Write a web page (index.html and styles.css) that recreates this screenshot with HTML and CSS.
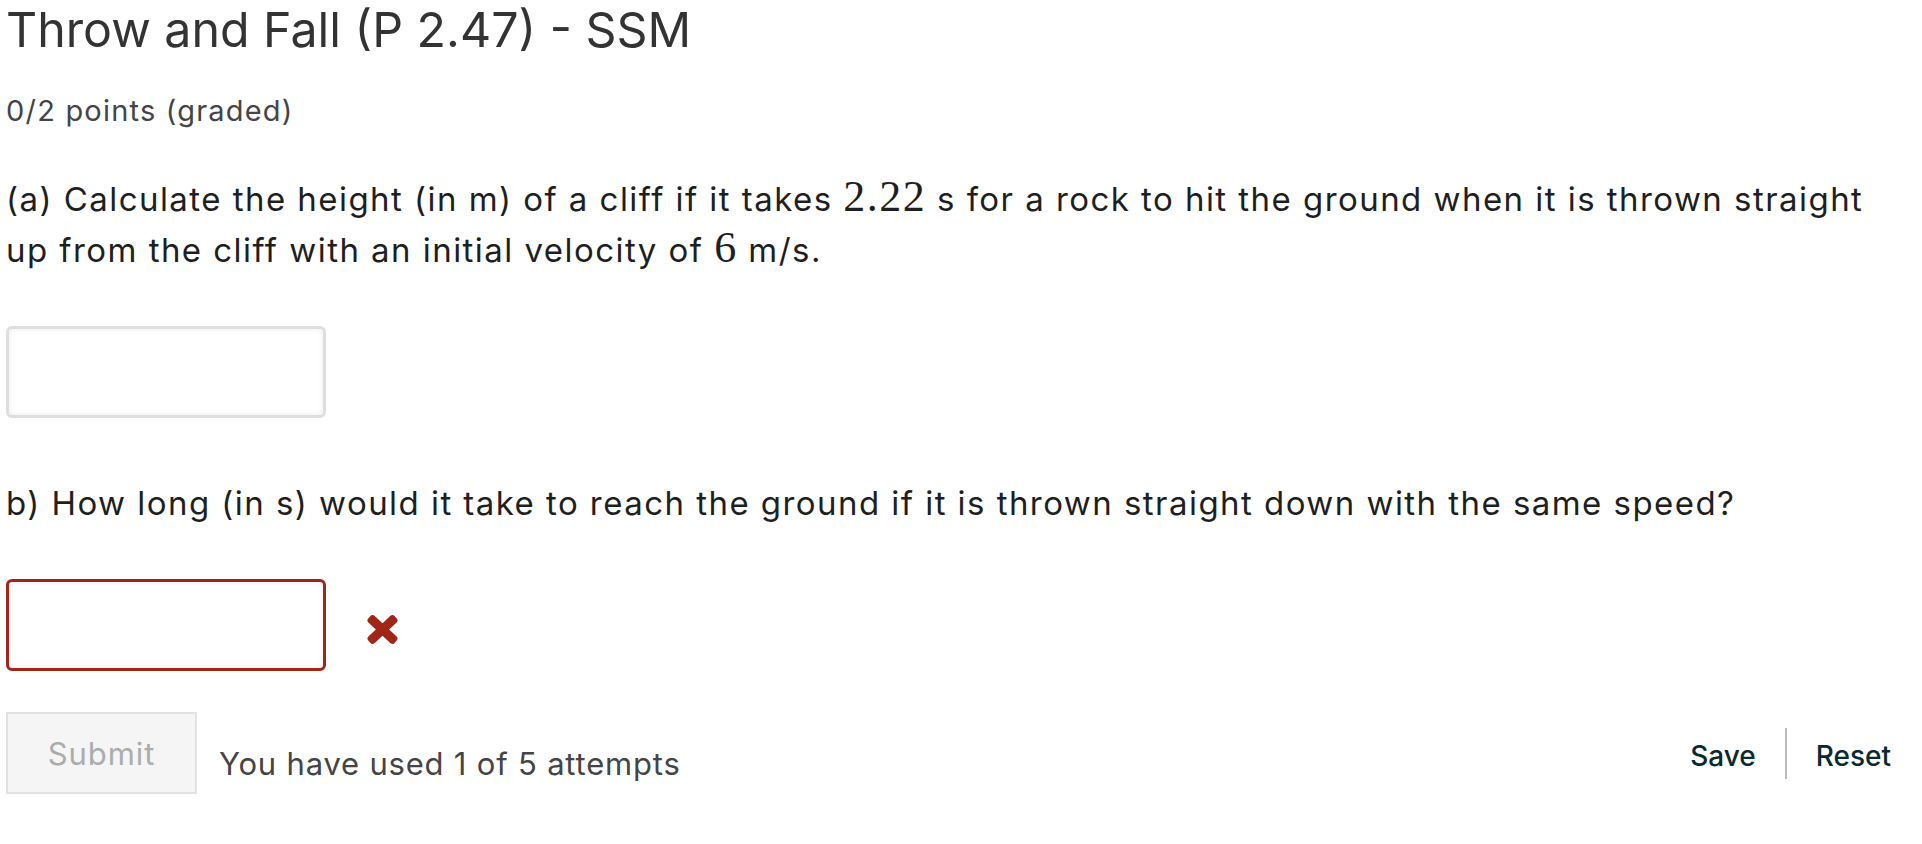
FILE: index.html
```html
<!DOCTYPE html>
<html lang="en">
<head>
<meta charset="utf-8">
<title>Throw and Fall (P 2.47) - SSM</title>
<link rel="stylesheet" href="styles.css">
</head>
<body>
<div class="problem">
  <h3 class="problem-header">Throw and Fall (P 2.47) - SSM</h3>
  <div class="problem-progress">0/2 points (graded)</div>
  <p class="question">(a) Calculate the height (in m) of a cliff if it takes <span class="math">2.22</span> s for a rock to hit the ground when it is thrown straight up from the cliff with an initial velocity of <span class="math">6</span> m/s.</p>
  <div class="answer-row">
    <input class="answer-input" type="text" aria-label="answer a">
  </div>
  <p class="question question-b">b) How long (in s) would it take to reach the ground if it is thrown straight down with the same speed?</p>
  <div class="answer-row answer-row-b">
    <input class="answer-input incorrect" type="text" aria-label="answer b">
    <span class="status-icon" aria-label="incorrect">
      <svg width="31" height="29" viewBox="0 0 31 29">
        <g fill="#a0261a">
          <rect x="-2.5" y="10" width="36" height="9" rx="3.2" transform="rotate(43 15.5 14.5)"/>
          <rect x="-2.5" y="10" width="36" height="9" rx="3.2" transform="rotate(-43 15.5 14.5)"/>
        </g>
      </svg>
    </span>
  </div>
  <div class="action-row">
    <div class="action-left">
      <button class="submit-btn" disabled>Submit</button>
      <span class="attempts">You have used 1 of 5 attempts</span>
    </div>
    <div class="action-right">
      <button class="link-btn">Save</button>
      <span class="divider"></span>
      <button class="link-btn">Reset</button>
    </div>
  </div>
</div>
</body>
</html>
```

FILE: styles.css
```css
html, body {
  margin: 0;
  padding: 0;
  background: #ffffff;
}

body {
  font-family: Inter, "Open Sans", "Liberation Sans", sans-serif;
  color: #1f1f1f;
}

.problem {
  padding: 0 31px 0 6px;
}

.problem-header {
  margin: 0;
  font-size: 48.3px;
  line-height: 60px;
  font-weight: 400;
  color: #333333;
}

.problem-progress {
  margin-top: 30px;
  font-size: 29px;
  line-height: 42px;
  letter-spacing: 1.2px;
  color: #454545;
}

.question {
  margin: 42px 0 0;
  font-size: 33px;
  line-height: 51px;
  letter-spacing: 1.45px;
  color: #1f1f1f;
}

.question-b {
  margin-top: 60px;
}

.math {
  font-family: "Liberation Serif", "DejaVu Serif", serif;
  font-size: 44px;
  line-height: 0;
  letter-spacing: 1.5px;
}

.answer-row {
  display: flex;
  align-items: center;
  margin-top: 50px;
}

.answer-row-b {
  margin-top: 50px;
}

.answer-input {
  box-sizing: border-box;
  width: 320px;
  height: 92px;
  margin: 0;
  border: 3px solid #dedede;
  border-radius: 6px;
  box-shadow: inset 0 0 6px rgba(0, 0, 0, 0.08);
  background: #ffffff;
  font-size: 30px;
  padding: 0 14px;
}

.answer-input.incorrect {
  border-color: #a0261a;
}

.status-icon {
  display: inline-flex;
  margin-left: 41px;
  margin-top: 8px;
}

.action-row {
  display: flex;
  justify-content: space-between;
  align-items: center;
  margin-top: 41px;
}

.action-left {
  display: flex;
  align-items: flex-end;
}

.submit-btn {
  box-sizing: border-box;
  width: 191px;
  height: 82px;
  border: 2px solid #e2e2e2;
  background: #f5f5f5;
  color: #acacac;
  font-family: Inter, "Open Sans", sans-serif;
  font-size: 31px;
  letter-spacing: 0.9px;
  padding: 0;
  margin: 0;
}

.attempts {
  margin-left: 22px;
  font-size: 31px;
  line-height: 40px;
  letter-spacing: 0.8px;
  color: #454545;
  margin-bottom: 10px;
}

.action-right {
  display: flex;
  align-items: center;
}

.link-btn {
  border: none;
  background: transparent;
  font-family: Inter, "Open Sans", sans-serif;
  font-size: 28px;
  font-weight: 500;
  color: #0a2a30;
  padding: 5px 0 0;
  margin: 0;
}

.divider {
  display: block;
  width: 2px;
  height: 51px;
  background: #bdbdbd;
  margin: 0 29px 0 29px;
}
```
